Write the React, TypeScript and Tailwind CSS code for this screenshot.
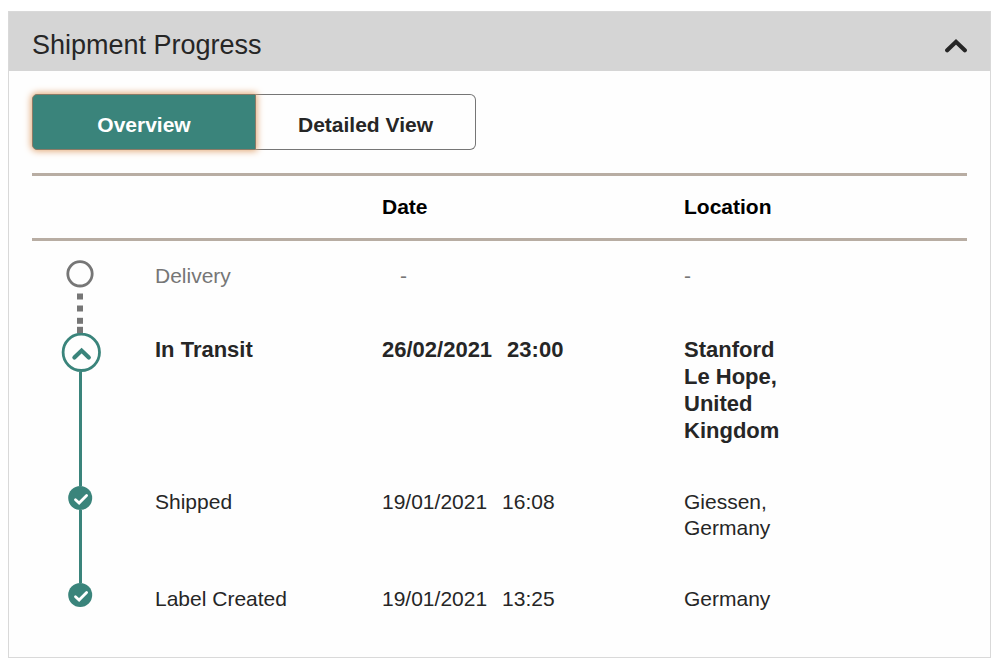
import { useState } from 'react'

type State = 'pending' | 'current' | 'done'
type View = 'overview' | 'detailed'

type Step = {
  label: string
  state: State
  date?: string
  time?: string
  location: string
}

const STEPS: Step[] = [
  { label: 'Delivery', state: 'pending', location: '-' },
  { label: 'In Transit', state: 'current', date: '26/02/2021', time: '23:00', location: 'Stanford Le Hope, United Kingdom' },
  { label: 'Shipped', state: 'done', date: '19/01/2021', time: '16:08', location: 'Giessen, Germany' },
  { label: 'Label Created', state: 'done', date: '19/01/2021', time: '13:25', location: 'Germany' },
]

const TABS: { label: string; value: View }[] = [
  { label: 'Overview', value: 'overview' },
  { label: 'Detailed View', value: 'detailed' },
]

const ROW_STYLES: Record<State, string> = {
  pending: 'h-[73px] text-[21px] leading-[26px] text-[#767676]',
  current: 'h-px text-[22px] leading-[27px] font-bold text-[#262626]',
  done: 'h-px text-[21px] leading-[26px] text-[#262626]',
}

function Marker({ state }: { state: State }) {
  if (state === 'pending') {
    return (
      <svg width="29" height="28" viewBox="0 0 29 28" fill="none" className="shrink-0" aria-hidden="true">
        <circle cx="14" cy="13.8" r="12.2" stroke="#767676" strokeWidth="2.8" />
      </svg>
    )
  }
  if (state === 'current') {
    return (
      <svg width="41" height="39" viewBox="0 0 41 39" fill="none" className="shrink-0" aria-hidden="true">
        <circle cx="21.3" cy="19.3" r="18.2" stroke="#3a847b" strokeWidth="2.8" />
        <path d="M14.4 24.6 21.6 17.6 28.8 24.6" stroke="#3a847b" strokeWidth="4.2" strokeLinecap="round" />
      </svg>
    )
  }
  return (
    <svg width="25" height="24" viewBox="0 0 25 24" fill="none" className="shrink-0" aria-hidden="true">
      <circle cx="12.2" cy="12" r="12" fill="#3a847b" />
      <path d="M7.5 13.8 11.1 17.1 18.6 9.6" stroke="#fff" strokeWidth="2.8" strokeLinecap="round" />
    </svg>
  )
}

function Connector({ state }: { state: State }) {
  if (state === 'pending') {
    return (
      <svg width="7" height="45" viewBox="0 0 7 45" fill="#767676" className="shrink-0" aria-hidden="true">
        <rect x="0" y="5.5" width="6" height="6" />
        <rect x="0" y="17.5" width="6" height="6" />
        <rect x="0" y="29.8" width="6" height="6" />
        <rect x="0" y="38.8" width="6" height="6.2" />
      </svg>
    )
  }
  return <div className="w-[3px] flex-1 bg-[#3a847b]" />
}

export default function App() {
  const [open, setOpen] = useState(true)
  const [view, setView] = useState<View>('overview')

  return (
    <div className="min-h-screen bg-white px-2 pt-[11px] pb-3 font-['Liberation_Sans',Arial,sans-serif] text-[#262626]">
      <section className="mr-[1px] border border-[#d9d9d9] bg-[#fefefe]">
        {/* Panel header */}
        <h2>
          <button
            type="button"
            aria-expanded={open}
            onClick={() => setOpen(!open)}
            className="flex h-[59px] w-full items-center justify-between bg-[#d5d5d5] pt-[6px] pr-[22px] pl-[23px] text-left text-[27px] leading-8"
          >
            Shipment Progress
            <svg width="24" height="16" viewBox="0 0 24 16" fill="none" className={open ? '' : 'rotate-180'} aria-hidden="true">
              <path d="M3.2 13.2 12 4.8 20.8 13.2" stroke="#262626" strokeWidth="4.2" strokeLinecap="round" />
            </svg>
          </button>
        </h2>

        {open && (
          <div className="px-[23px] pt-[23px] pb-[3px]">
            {/* View switch */}
            <div className="flex w-[444px] text-[21px] font-bold">
              {TABS.map(({ label, value }) => (
                <button
                  key={value}
                  type="button"
                  aria-pressed={view === value}
                  onClick={() => setView(value)}
                  className={`h-14 border pt-[6px] first:w-56 first:rounded-l-[5px] last:flex-1 last:rounded-r-[6px] last:border-l-0 ${
                    view === value
                      ? 'z-10 border-[#8d7b67] bg-[#3a847b] text-white shadow-[0_0_7px_1px_#e2a672]'
                      : 'border-[#767676]'
                  }`}
                >
                  {label}
                </button>
              ))}
            </div>

            <table className="mt-[23px] w-full table-fixed border-collapse text-left">
              <thead className="text-[21px] leading-[26px] text-black">
                <tr className="h-[65px] border-y-[3px] border-[#b8ada3]">
                  <th className="w-[123px]" aria-label="Progress" />
                  <th className="w-[227px]" aria-label="Status" />
                  <th className="w-[302px]">Date</th>
                  <th>Location</th>
                </tr>
              </thead>
              <tbody className="before:block before:h-[19px] before:content-['']">
                {STEPS.map((step, idx) => (
                  <tr key={step.label} className={`align-top ${ROW_STYLES[step.state]}`}>
                    <td className="h-[inherit]">
                      <div className="flex h-full w-[97px] flex-col items-center">
                        <Marker state={step.state} />
                        {idx < STEPS.length - 1 && <Connector state={step.state} />}
                      </div>
                    </td>
                    <td className="pt-[3px]">{step.label}</td>
                    <td className="pt-[3px]">
                      {step.date ? (
                        <div className="flex gap-[15px]">
                          <span>{step.date}</span>
                          <span>{step.time}</span>
                        </div>
                      ) : (
                        <span className="pl-[18px]">-</span>
                      )}
                    </td>
                    <td className="pt-[3px] pb-[42px]">
                      <div className="max-w-[115px]">{step.location}</div>
                    </td>
                  </tr>
                ))}
              </tbody>
            </table>
          </div>
        )}
      </section>
    </div>
  )
}
